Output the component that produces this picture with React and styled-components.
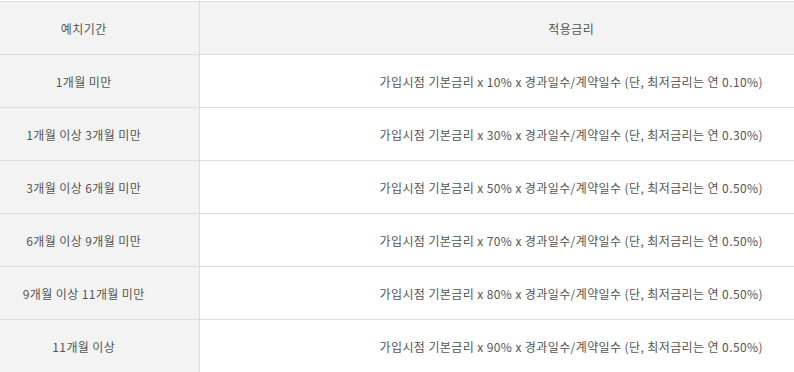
import React from 'react';
import styled, { createGlobalStyle } from 'styled-components';

const GlobalStyle = createGlobalStyle`
  html, body {
    margin: 0;
    padding: 0;
    background: #fff;
    overflow: hidden;
  }
  body {
    font-family: "Noto Sans CJK KR", "Noto Sans", sans-serif;
  }
`;

const Wrapper = styled.div`
  padding-top: 1px;
  width: 943px;
`;

const Table = styled.table`
  width: 943px;
  border-collapse: collapse;
  table-layout: fixed;
  font-size: 12px;
  letter-spacing: 0.4px;
  color: #555;
`;

const HeadCell = styled.th`
  height: 52px;
  padding: 0 ${p => (p.$first ? '31px' : '0')} 0 0;
  background: #f3f3f3;
  border-top: 1px solid #ddd;
  border-bottom: 1px solid #ddd;
  border-left: ${p => (p.$first ? 'none' : '1px solid #ddd')};
  font-weight: 400;
  text-align: center;
  vertical-align: middle;
`;

const PeriodCell = styled.td`
  height: 52px;
  padding: 0 31px 0 0;
  background: #f3f3f3;
  border-bottom: 1px solid #ddd;
  text-align: center;
  vertical-align: middle;
`;

const RateCell = styled.td`
  height: 52px;
  padding: 0;
  background: #fff;
  border-bottom: 1px solid #ddd;
  border-left: 1px solid #ddd;
  text-align: center;
  vertical-align: middle;
`;

const rows = [
  { period: '1개월 미만', pct: '10%', min: '0.10%' },
  { period: '1개월 이상 3개월 미만', pct: '30%', min: '0.30%' },
  { period: '3개월 이상 6개월 미만', pct: '50%', min: '0.50%' },
  { period: '6개월 이상 9개월 미만', pct: '70%', min: '0.50%' },
  { period: '9개월 이상 11개월 미만', pct: '80%', min: '0.50%' },
  { period: '11개월 이상', pct: '90%', min: '0.50%' },
];

export default function App() {
  return (
    <Wrapper>
      <GlobalStyle />
      <Table>
        <colgroup>
          <col style={{ width: 199 }} />
          <col />
        </colgroup>
        <thead>
          <tr>
            <HeadCell $first>예치기간</HeadCell>
            <HeadCell>적용금리</HeadCell>
          </tr>
        </thead>
        <tbody>
          {rows.map(r => (
            <tr key={r.period}>
              <PeriodCell>{r.period}</PeriodCell>
              <RateCell>
                가입시점 기본금리 x {r.pct} x 경과일수/계약일수 (단, 최저금리는 연 {r.min})
              </RateCell>
            </tr>
          ))}
        </tbody>
      </Table>
    </Wrapper>
  );
}
